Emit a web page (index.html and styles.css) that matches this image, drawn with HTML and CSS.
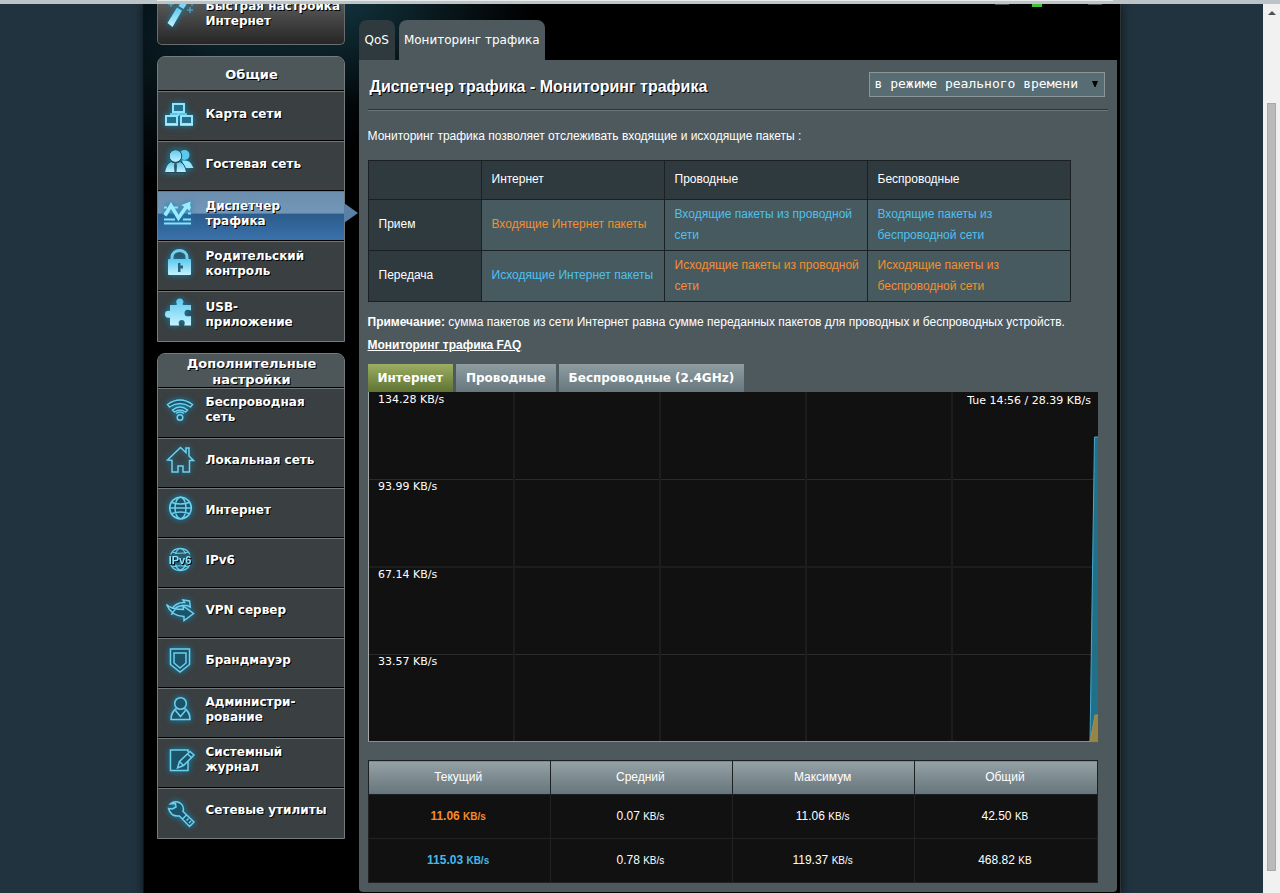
FILE: index.html
```html
<!DOCTYPE html>
<html lang="ru">
<head>
<meta charset="utf-8">
<title>Мониторинг трафика</title>
<link rel="stylesheet" href="styles.css">
</head>
<body>
<svg width="0" height="0" class="defs" aria-hidden="true">
  <defs>
    <linearGradient id="ice" x1="0" y1="0" x2="0" y2="1">
      <stop offset="0" stop-color="#5cc8ee"/><stop offset="1" stop-color="#c4f3ff"/>
    </linearGradient>
  </defs>
</svg>
<div class="topline"><div class="topline-inner"></div></div>
<div class="viewport">
  <div class="stage">
    <div class="wrapper">
      <nav class="sidebar">
        <button class="quick" type="button">
          <svg class="icon" viewBox="0 0 32 32"><path d="M4.500 24 14 8.500l5 3L9.500 28z" fill="url(#ice)"/><path d="M15.500 7l3-4.500 5 3-3 4.500z" fill="#79d7f5"/><path d="M27 8v6M24 11h6M8 3v5M5 5h6M29 2v5M27 4h5" stroke="#4db8dc" stroke-width="1"/></svg>
          <span>Быстрая настройка Интернет</span>
        </button>
        <section class="menu">
          <h2>Общие</h2>
          <a href="#" class="item"><svg class="icon" viewBox="0 0 32 32"><path d="M15.500 15v4M8 19v-2h15v2" fill="none" stroke="#7fdcf8" stroke-width="1.500"/><g fill="#236f8c" stroke="#8fe3fb" stroke-width="2"><rect x="10" y="7" width="11" height="8"/><rect x="3" y="19" width="11" height="8"/><rect x="18" y="19" width="11" height="8"/></g><path d="M2 28h13M17 28h13" stroke="#b7f1ff" stroke-width="1.500"/></svg><span>Карта сети</span></a>
          <a href="#" class="item"><svg class="icon" viewBox="0 0 32 32"><circle cx="21.500" cy="8" r="5" fill="#5cc8ee"/><path d="M19 13.500q7-.5 9 3l2.500 4.500H22z" fill="#9ae6fb"/><g stroke="#2c4550" stroke-width="1"><path d="M1.500 25.500q1-8 6.500-11l4.500 2 4.500-2q5.500 3 6.500 11z" fill="url(#ice)"/><circle cx="12.500" cy="9" r="6.300" fill="url(#ice)"/></g><path d="M11.500 16.500h2l.5 2.500-.5 6h-2l-.5-6z" fill="#2a5b70"/></svg><span>Гостевая сеть</span></a>
          <a href="#" class="item active" aria-current="page"><svg class="icon" viewBox="0 0 32 32"><path d="M1 10.500h3M11 10.500h4M25.500 10.500h2.500M1 16.500h2M25 16.500h3M1 22.500h11M20 22.500h8M1 26.500h27" stroke="#8ce0fb" stroke-width="2"/><path d="M2 18.500 8 8.500l7.500 12.500 8-11.500" fill="none" stroke="#9beafe" stroke-width="3.600"/><path d="M18.500 8 27.500 4.500 27 14z" fill="#9beafe"/></svg><span>Диспетчер трафика</span></a>
          <a href="#" class="item"><svg class="icon" viewBox="0 0 32 32"><path d="M9 13v-3a7.500 6.500 0 0 1 15 0v3" fill="none" stroke="#6fd0f0" stroke-width="3"/><rect x="5" y="12" width="23" height="16" rx="1" fill="url(#ice)"/><path d="M15 16h2.500v2.500H20v3h-2.500V25H15z" fill="#28647d"/></svg><span>Родительский контроль</span></a>
          <a href="#" class="item"><svg class="icon" viewBox="0 0 32 32"><path d="M7 7h6.500q1-1-.2-2.500a3.600 3.300 0 1 1 7 0Q19 6 20 7h8v5.500q-6-2.500-6.500 2.200T28 18v9.500h-7q.8-1 .7-2.500a3 3 0 0 0-6 0q0 1.500.8 2.500H7v-8q-5 1-5-3.200t5-3.300z" fill="url(#ice)"/></svg><span>USB-<br>приложение</span></a>
        </section>
        <section class="menu extra">
          <h2>Дополнительные настройки</h2>
          <a href="#" class="item"><svg class="icon line" viewBox="0 0 32 32"><path d="M4.500 10.500q12.500-9 25 0l-2 2.500q-10.500-7-21 0z M9.500 16q7.500-6 15 0l-2 2q-5.500-4-11 0z"/><path d="M13 19.500q4-3 8 0" fill="none"/><circle cx="17" cy="23.500" r="2.800"/></svg><span>Беспроводная сеть</span></a>
          <a href="#" class="item"><svg class="icon line" viewBox="0 0 32 32"><path d="M4.500 16 17.500 3.500l5.500 5V4h3v8l4.500 4.500h-4V28h-6.500v-6h-5v6H9V16.500z" fill="none"/></svg><span>Локальная сеть</span></a>
          <a href="#" class="item"><svg class="icon line" viewBox="0 0 32 32"><circle cx="17.500" cy="14" r="10.800"/><ellipse cx="17.500" cy="14" rx="5.500" ry="10.800"/><path d="M9 8.500q8.500 3 17 0M9 19.500q8.500-3 17 0M7 14h21"/></svg><span>Интернет</span></a>
          <a href="#" class="item"><svg class="icon line" viewBox="0 0 32 32"><path d="M7.500 10.500a10.800 10.800 0 0 1 19.500 0M7.500 20.500a10.800 10.800 0 0 0 19.500 0M12.500 10q1.500-5 4.500-5.500 4 .5 5.500 5.500M12.500 20.500q1.500 5 4.500 5.500 4-.5 5.500-5.500M9 8q8 2.500 16.500 0M9 23q8-2.500 16.500 0" fill="none" stroke-width="1.200"/><text x="17" y="19.500" text-anchor="middle" class="glyph-label">IPv6</text></svg><span>IPv6</span></a>
          <a href="#" class="item"><svg class="icon line" viewBox="0 0 32 32"><path d="M3.500 10.500Q8 15.500 20.500 15.500l-.5-3.500 10.500 7.500L21 26.500V22.500Q8.500 22 3.500 10.500z"/><path d="M9 14.500q5-6.500 12.500-6l-1.500-2.500 6.500 1 .8 6-3.300-1.500Q14 11 11.500 15.500M8.500 21q.5-3 4-5.500" fill="none"/></svg><span>VPN сервер</span></a>
          <a href="#" class="item"><svg class="icon line" viewBox="0 0 32 32"><path d="M7.500 5h19v15.500L17 28l-9.500-7.500z"/><path d="M11 9h12v10l-6 5-6-5z"/></svg><span>Брандмауэр</span></a>
          <a href="#" class="item"><svg class="icon line" viewBox="0 0 32 32"><path d="M13.500 14.500Q8 18 8 25.500h19q0-7.500-5.500-11"/><circle cx="17.500" cy="9.500" r="5.800"/><path d="M12.500 16.500l5 6 5-6" fill="none"/></svg><span>Администри-<br>рование</span></a>
          <a href="#" class="item"><svg class="icon line" viewBox="0 0 32 32"><path d="M25 8V6H7.500v20.500H25V17"/><path d="M14.500 24l2-6.500L27 7.500l4 3.500-10.500 10.500zM16.500 17.500l4 4M24.500 10l4 3.500"/></svg><span>Системный журнал</span></a>
          <a href="#" class="item"><svg class="icon line" viewBox="0 0 32 32"><path d="M5.500 13.500l4 .5 3.500-2-.5-3.500-5 .3Q12 5 17 8q4.500 3 3 8.500L31 27l-4.500 4.500L16.500 21Q8 22 5.500 13.500zM19.500 24l4.500-4.500M23.500 25.500l2-2M26 28l2-2"/></svg><span>Сетевые утилиты</span></a>
        </section>
      </nav>
      <main class="content">
        <div class="leds" aria-hidden="true"><i></i><i class="on"></i><i></i></div>
        <div class="tabs">
          <a href="#" class="tab">QoS</a>
          <a href="#" class="tab current">Мониторинг трафика</a>
        </div>
        <div class="panel">
          <header class="panel-head">
            <h1>Диспетчер трафика - Мониторинг трафика</h1>
            <div class="mode">
              <select aria-label="Режим"><option>в режиме реального времени</option></select>
              <svg viewBox="0 0 8 8" aria-hidden="true"><path d="M1 1h6L4.500 7h-1z"/></svg>
            </div>
          </header>
          <p class="intro">Мониторинг трафика позволяет отслеживать входящие и исходящие пакеты :</p>
          <table class="legend">
            <colgroup><col class="c1"><col class="c2"><col class="c3"><col class="c3"></colgroup>
            <tr><th></th><th>Интернет</th><th>Проводные</th><th>Беспроводные</th></tr>
            <tr><th>Прием</th><td class="orange">Входящие Интернет пакеты</td><td class="blue">Входящие пакеты из проводной сети</td><td class="blue">Входящие пакеты из беспроводной сети</td></tr>
            <tr><th>Передача</th><td class="blue">Исходящие Интернет пакеты</td><td class="orange">Исходящие пакеты из проводной сети</td><td class="orange">Исходящие пакеты из беспроводной сети</td></tr>
          </table>
          <p class="note"><b>Примечание:</b> сумма пакетов из сети Интернет равна сумме переданных пакетов для проводных и беспроводных устройств.</p>
          <a class="faq" href="#">Мониторинг трафика FAQ</a>
          <div class="sources">
            <button type="button" class="selected">Интернет</button>
            <button type="button">Проводные</button>
            <button type="button">Беспроводные (2.4GHz)</button>
          </div>
          <svg class="graph" viewBox="0 0 730 350">
            <rect width="730" height="350" fill="#111"/>
            <g stroke="#2b2b2b"><path d="M0 87.500h730M0 262.500h730"/><path d="M0 175h730M146 0v350M292 0v350M438 0v350M584 0v350" stroke="#1d1d1d" stroke-width="2"/></g>
            <path d="M722 350 726.500 45H730V350z" fill="#20708a"/>
            <path d="M722 350 726.500 45H730" fill="none" stroke="#48a9c9"/>
            <path d="M722 350 727 323H730V350z" fill="#98853f"/>
            <path d="M.5 0V349.500" stroke="#a5aaa8"/>
            <path d="M0 349.500H722L727 323H730" fill="none" stroke="#a08c5a"/>
            <g class="axis"><text x="10" y="11">134.28 KB/s</text><text x="10" y="98">93.99 KB/s</text><text x="10" y="186">67.14 KB/s</text><text x="10" y="273">33.57 KB/s</text><text x="723" y="12" text-anchor="end">Tue 14:56 / 28.39 KB/s</text></g>
          </svg>
          <table class="totals">
            <tr><th>Текущий</th><th>Средний</th><th>Максимум</th><th>Общий</th></tr>
            <tr><td class="orange"><b>11.06 <small>KB/s</small></b></td><td>0.07 <small>KB/s</small></td><td>11.06 <small>KB/s</small></td><td>42.50 <small>KB</small></td></tr>
            <tr><td class="blue"><b>115.03 <small>KB/s</small></b></td><td>0.78 <small>KB/s</small></td><td>119.37 <small>KB/s</small></td><td>468.82 <small>KB</small></td></tr>
          </table>
        </div>
      </main>
    </div>
  </div>
  <div class="scrollbar" aria-hidden="true"><div class="arrow"></div><div class="thumb"></div></div>
</div>
</body>
</html>
```
FILE: styles.css
```css
* { box-sizing: border-box; }
body {
  margin: 0;
  min-height: 100vh;
  display: flex;
  flex-direction: column;
  background: #21333e;
  color: #fff;
  font-family: "Liberation Sans", Arial, sans-serif;
  font-size: 12px;
}
.defs { position: absolute; }
.topline { position: relative; z-index: 1; height: 4px; background: #bcc4c7; padding: 0 167px 0 157px; }
.topline-inner { height: 1px; background: #e6eaea; }
.viewport { flex: 1; display: flex; }
.stage { flex: 1; display: flex; justify-content: center; min-width: 0; }
.wrapper {
  width: 100%;
  max-width: 978px;
  padding: 0 3px 2px 13px;
  display: flex;
  gap: 14px;
  align-items: flex-start;
  background:
    radial-gradient(ellipse 190px 100px at 200px 0, #11303a, transparent),
    radial-gradient(ellipse 240px 150px at 60px 30px, #0a1e26, transparent),
    #000;
  border-left: 1px solid #0a151b;
  border-right: 1px solid #303334;
  box-shadow: 0 0 9px #0b151b;
}

/* sidebar */
.sidebar {
  flex: 0 0 188px;
  display: flex;
  flex-direction: column;
  gap: 11px;
  font-family: "DejaVu Sans", Verdana, sans-serif;
  font-weight: bold;
  line-height: 15px;
  text-shadow: 1px 1px 0 #000;
}
.quick {
  height: 41px;
  overflow: hidden;
  display: flex;
  align-items: flex-end;
  padding: 0 0 15px 5px;
  border: 1px solid #6a6d6e;
  border-top: 0;
  border-radius: 0 0 5px 5px;
  background: linear-gradient(#575757, #262626);
  color: inherit;
  font: inherit;
  text-align: left;
  text-shadow: inherit;
}
.icon {
  flex: none;
  width: 32px;
  height: 32px;
  margin-right: 11px;
  overflow: visible;
  filter: drop-shadow(0 0 3px #0d88b4);
}
.quick .icon { margin-bottom: -2px; }
.icon.line { fill: #1b5368; stroke: #6fd0ee; stroke-width: 1.5px; }
.glyph-label {
  font: bold 11px "Liberation Sans", sans-serif;
  fill: #8fe3fb;
  stroke: none;
}
.menu {
  border: 1px solid #767c7d;
  border-radius: 8px 8px 0 0;
  background: #3a3f41;
}
.menu h2 {
  margin: 0;
  height: 34px;
  display: flex;
  align-items: center;
  justify-content: center;
  text-align: center;
  padding: 2px 18px 0 20px;
  border-bottom: 1px solid #000;
  border-radius: 7px 7px 0 0;
  background: #4d5659;
  font-size: 13px;
  line-height: 16px;
}
.item {
  position: relative;
  height: 50px;
  display: flex;
  align-items: center;
  padding: 0 10px 4px 5px;
  border-top: 1px solid #707677;
  border-bottom: 1px solid #000;
  color: inherit;
  text-decoration: none;
}
.item .icon { margin-bottom: 2px; }
.item:last-child { border-bottom: 0; }
.extra .item { padding-bottom: 6px; }
.extra .icon { margin-bottom: 0; }
.item.active {
  background: linear-gradient(#6b8eae 0, #7397b8 44%, #2c5b8c 46%, #3a72aa 100%);
}
.item.active::after {
  content: "";
  position: absolute;
  left: 100%;
  top: 11px;
  border: 10px solid transparent;
  border-left: 14px solid #5a80a6;
  border-right: 0;
}

/* content */
.content { flex: 1; min-width: 0; position: relative; }
.leds { position: absolute; top: 0; right: 15px; width: 107px; display: flex; }
.leds i { width: 14px; height: 1px; background: #4a4a4a; }
.leds .on { width: 10px; height: 3px; margin: 0 auto 0 23px; background: #3cc43c; }
.tabs { display: flex; gap: 4px; padding-top: 16px; }
.tab {
  height: 40px;
  padding: 0 6px;
  border-radius: 8px 8px 0 0;
  background: #2f3a3e;
  color: #fff;
  font: 12px/40px "DejaVu Sans", Verdana, sans-serif;
  text-decoration: none;
}
.tab.current { padding: 0 5px; background: #4d595d; }
.panel {
  padding: 0 19px 9px 9px;
  background: #4d595d;
  border-radius: 0 0 4px 4px;
}
.panel-head {
  display: flex;
  justify-content: space-between;
  align-items: center;
  height: 51px;
  margin-right: -10px;
  padding: 0 3px 2px 2px;
  border-bottom: 1px solid #6c777a;
  box-shadow: inset 0 -1px 0 #2b3438;
}
h1 { margin: 6px 0 0; font-size: 16px; line-height: 20px; text-shadow: 1px 1px 0 #000; }
.mode { position: relative; display: flex; }
.mode select {
  appearance: none;
  width: 236px;
  height: 25px;
  margin: 0;
  padding: 0 0 2px 5px;
  border: 1px solid #8a9698;
  border-radius: 0;
  background: #576d73;
  color: #fff;
  font: 13px "DejaVu Sans Mono", monospace;
}
.mode svg { position: absolute; right: 6px; top: 8px; width: 8px; height: 8px; }
p { margin: 0; }
.intro { padding: 17px 0 15px; line-height: 17px; }
table { border-collapse: collapse; table-layout: fixed; }
.legend { width: 703px; max-width: 100%; }
.c1 { width: 113px; }
.c2 { width: 183px; }
.c3 { width: 203px; }
.legend th, .legend td {
  height: 51px;
  padding: 0 4px 1px 10px;
  border: 1px solid #1b2022;
  line-height: 21px;
  text-align: left;
  font-weight: normal;
}
.legend tr:first-child th { height: 39px; }
.legend th { padding-bottom: 2px; background: #2f3a3e; }
.legend td { background: #475a5f; }
.legend .orange { color: #f58e2f; }
.legend .blue { color: #4fc0ee; }
.note { padding-top: 9px; line-height: 22px; white-space: nowrap; }
.faq { display: block; color: #fff; font-weight: bold; line-height: 24px; }
.sources { display: flex; gap: 3px; padding-top: 7px; }
.sources button {
  height: 28px;
  padding: 0 10px;
  border: 0;
  background: linear-gradient(#8f9da2, #66777d);
  color: #fff;
  font: bold 12px "DejaVu Sans", Verdana, sans-serif;
}
.sources .selected { background: linear-gradient(#9cae62, #5f7334); }
.graph { display: block; width: 100%; }
.axis text { font: 11px "DejaVu Sans", Verdana, sans-serif; fill: #fff; }
.totals { width: 100%; margin-top: 18px; }
.totals th, .totals td {
  height: 44px;
  padding: 0 2px 2px 0;
  border: 1px solid #222;
  background: #111;
  text-align: center;
}
.totals th {
  height: 34px;
  border-color: #1b2022;
  background: linear-gradient(#94a1a6, #66757b);
  font-weight: normal;
}
.totals small { font-size: 10px; }
.totals .orange { color: #f68b26; }
.totals .blue { color: #45b9e8; }

/* window scrollbar */
.scrollbar { flex: 0 0 17px; background: #f1f1f1; padding: 7px 4px 23px; display: flex; flex-direction: column; align-items: center; }
.arrow { border: 4px solid transparent; border-top: 0; border-bottom: 4px solid #505050; margin-bottom: 88px; }
.thumb { flex: 1; width: 9px; background: #bababa; border: 1px solid #a8a8a8; }
```
